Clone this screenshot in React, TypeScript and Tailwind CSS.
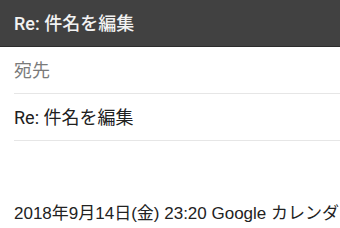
import React from "react";

const SANS = "font-['Roboto','Noto_Sans_CJK_JP',sans-serif]";

export default function App() {
  return (
    <div className={`w-[340px] h-[228px] overflow-hidden bg-white ${SANS}`}>
      <header className="h-[47px] bg-[#414141] border-b border-[#2c2c2c] flex items-center px-[14px]">
        <h1 className="text-[18px] font-medium text-[#f2f2f2] whitespace-nowrap">
          Re: 件名を編集
        </h1>
      </header>
      <div className="pl-[14px]">
        <div className="h-[47px] flex items-center border-b border-[#e6e6e6] text-[18px] text-[#7a7a7a]">
          宛先
        </div>
        <div className="h-[47px] flex items-center border-b border-[#e6e6e6] text-[18px] text-[#202020]">
          Re: 件名を編集
        </div>
        <p className="mt-[61px] leading-[24px] whitespace-nowrap text-[17px] text-[#222] font-['Liberation_Sans','Noto_Sans_CJK_JP',sans-serif]">
          2018年9月14日(金) 23:20 Google カレンダー
        </p>
      </div>
    </div>
  );
}
